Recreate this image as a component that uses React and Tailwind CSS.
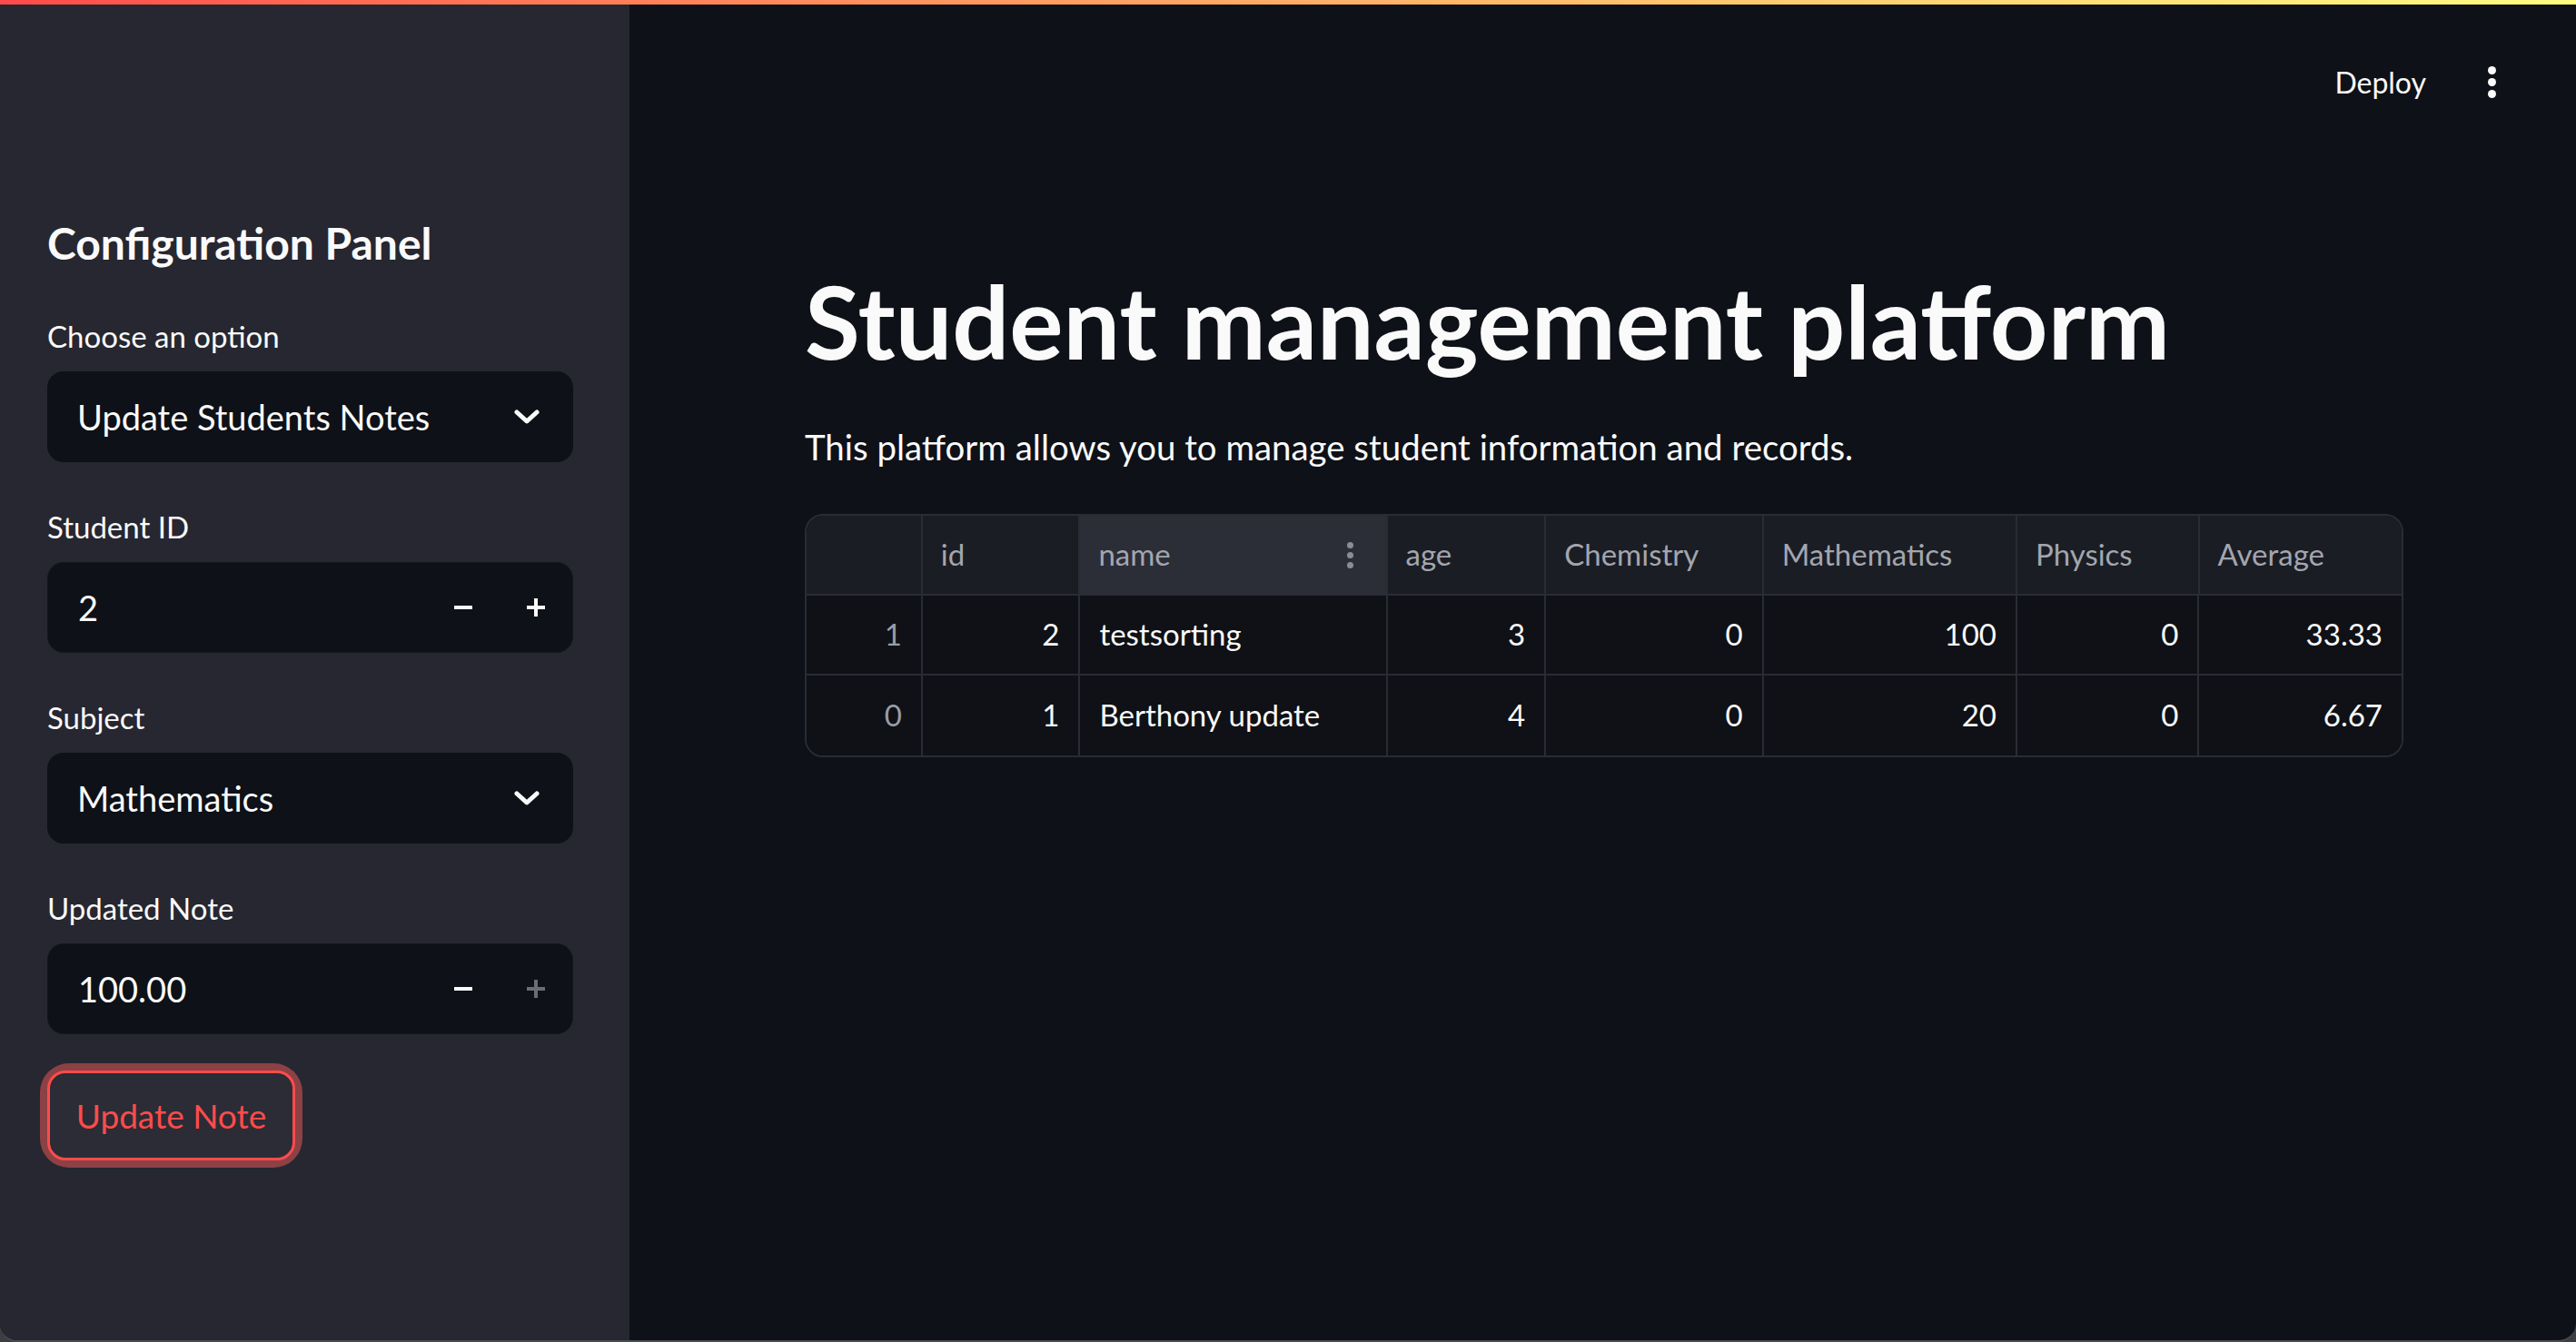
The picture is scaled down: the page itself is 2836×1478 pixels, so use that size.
import React from 'react';

const font = { fontFamily: 'Lato, "Noto Sans", sans-serif' };

const Chevron = () => (
  <svg width="28" height="16" viewBox="0 0 28 16" fill="none">
    <path d="M3 3l11 10L25 3" stroke="#fafafa" strokeWidth="5" strokeLinecap="round" strokeLinejoin="round" />
  </svg>
);

const Minus = ({ color = '#fafafa' }) => (
  <svg width="22" height="22" viewBox="0 0 22 22">
    <rect x="1" y="9" width="20" height="4" fill={color} />
  </svg>
);

const Plus = ({ color = '#fafafa' }) => (
  <svg width="22" height="22" viewBox="0 0 22 22">
    <rect x="1" y="9" width="20" height="4" fill={color} />
    <rect x="9" y="1" width="4" height="20" fill={color} />
  </svg>
);

const Label = ({ children, className = '' }) => (
  <div className={`text-[33px] leading-[40px] h-[40px] mb-[19px] text-[#fafafa] ${className}`}>{children}</div>
);

const SelectBox = ({ value }) => (
  <div className="h-[100px] rounded-[18px] bg-[#0e1117] flex items-center justify-between pl-[33px] pr-[37px]">
    <span className="text-[38px] text-[#fafafa]">{value}</span>
    <Chevron />
  </div>
);

const NumberBox = ({ value, plusDisabled }) => (
  <div className="h-[100px] rounded-[18px] bg-[#0e1117] border border-[#15171d] flex items-center pl-[33px]">
    <span className="flex-1 text-[38px] text-[#fafafa]">{value}</span>
    <div className="w-[80px] h-full flex items-center justify-center"><Minus /></div>
    <div className="w-[80px] h-full flex items-center justify-center"><Plus color={plusDisabled ? '#6b6d76' : '#fafafa'} /></div>
  </div>
);

const columns = [
  { key: 'idx', label: '', w: 128 },
  { key: 'id', label: 'id', w: 174 },
  { key: 'name', label: 'name', w: 339, text: true },
  { key: 'age', label: 'age', w: 175 },
  { key: 'chem', label: 'Chemistry', w: 240 },
  { key: 'math', label: 'Mathematics', w: 280 },
  { key: 'phys', label: 'Physics', w: 201 },
  { key: 'avg', label: 'Average', w: 223 },
];

const rows = [
  { idx: '1', id: '2', name: 'testsorting', age: '3', chem: '0', math: '100', phys: '0', avg: '33.33' },
  { idx: '0', id: '1', name: 'Berthony update', age: '4', chem: '0', math: '20', phys: '0', avg: '6.67' },
];

const DataTable = () => (
  <div className="w-[1760px] rounded-[20px] border-2 border-[#2a2c33] overflow-hidden">
    <div className="flex h-[88px] border-b-2 border-[#2a2c33]">
      {columns.map((c, i) => (
        <div
          key={c.key}
          style={{ width: c.w }}
          className={`h-full flex items-center justify-between px-[20px] text-[33px] text-[#a3a6af] ${i < columns.length - 1 ? 'border-r-2 border-[#2a2c33]' : ''} ${c.key === 'name' ? 'bg-[#2c2e37]' : 'bg-[#1b1d24]'}`}
        >
          <span>{c.label}</span>
          {c.key === 'name' && (
            <span className="flex flex-col gap-[4px] mr-[16px]">
              <span className="w-[7px] h-[7px] rounded-full bg-[#8a8d96]" />
              <span className="w-[7px] h-[7px] rounded-full bg-[#8a8d96]" />
              <span className="w-[7px] h-[7px] rounded-full bg-[#8a8d96]" />
            </span>
          )}
        </div>
      ))}
    </div>
    {rows.map((r, ri) => (
      <div key={ri} className={`flex h-[88px] bg-[#0f1116] ${ri < rows.length - 1 ? 'border-b-2 border-[#2a2c33]' : ''}`}>
        {columns.map((c, i) => (
          <div
            key={c.key}
            style={{ width: c.w }}
            className={`h-full flex items-center px-[21px] text-[33px] ${c.text ? 'justify-start' : 'justify-end'} ${c.key === 'idx' ? 'text-[#9a9da6]' : 'text-[#fafafa]'} ${i < columns.length - 1 ? 'border-r-2 border-[#2a2c33]' : ''}`}
          >
            {r[c.key]}
          </div>
        ))}
      </div>
    ))}
  </div>
);

export default function App() {
  return (
    <div className="w-[2836px] h-[1478px] bg-[#3d3e43] overflow-hidden" style={font}>
      <div className="w-full h-full flex flex-col rounded-b-[20px] overflow-hidden border-b-2 border-[#4b4c52] bg-[#0e1117]">
        <div className="h-[5px] shrink-0 bg-gradient-to-r from-[#ff4b4b] to-[#fffd80]" />
        <div className="flex flex-1 min-h-0">
          {/* sidebar */}
          <aside className="w-[693px] shrink-0 bg-[#262730] pl-[52px] pr-[62px] pt-[234px]">
            <h2 className="text-[48px] leading-[58px] font-bold text-[#fafafa] mb-[53px]">Configuration Panel</h2>
            <Label>Choose an option</Label>
            <SelectBox value="Update Students Notes" />
            <Label className="mt-[51px]">Student ID</Label>
            <NumberBox value="2" />
            <Label className="mt-[51px]">Subject</Label>
            <SelectBox value="Mathematics" />
            <Label className="mt-[51px]">Updated Note</Label>
            <NumberBox value="100.00" plusDisabled />
            <div className="mt-[40px] inline-block rounded-[24px] ring-[8px] ring-[#8c4145]">
              <button className="h-[99px] w-[273px] rounded-[20px] border-[3px] border-[#ff4b4b] bg-[#2b2c35] text-[37px] text-[#ff4b4b]">
                Update Note
              </button>
            </div>
          </aside>

          {/* main */}
          <main className="flex-1 flex flex-col px-[193px]">
            <div className="h-[110px] flex justify-end items-start pt-[66px] -mr-[102px]">
              <span className="text-[32px] leading-[39px] text-[#fafafa]">Deploy</span>
              <span className="ml-[68px] mt-[2px] flex flex-col gap-[4px] items-center w-[9px]">
                <span className="w-[9px] h-[9px] rounded-full bg-[#fafafa]" />
                <span className="w-[9px] h-[9px] rounded-full bg-[#fafafa]" />
                <span className="w-[9px] h-[9px] rounded-full bg-[#fafafa]" />
              </span>
            </div>
            <h1 className="mt-[172px] text-[111px] leading-[133px] font-bold text-[#fafafa]">Student management platform</h1>
            <p className="mt-[49px] text-[38.4px] leading-[46px] text-[#fafafa]">
              This platform allows you to manage student information and records.
            </p>
            <div className="mt-[51px]">
              <DataTable />
            </div>
          </main>
        </div>
      </div>
    </div>
  );
}
